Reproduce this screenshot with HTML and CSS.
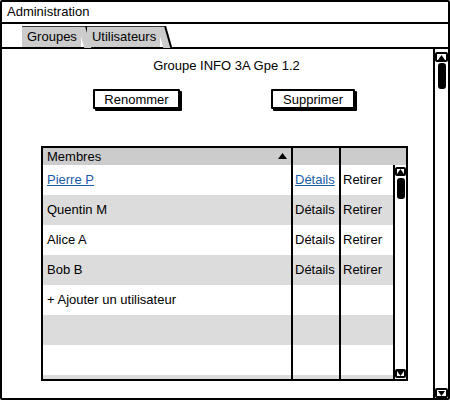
FILE: index.html
```html
<!DOCTYPE html>
<html>
<head>
<meta charset="utf-8">
<link rel="stylesheet" href="styles.css">
</head>
<body>
<div class="window">
  <div class="titlebar">Administration</div>
  <div class="tabbar">
    <div class="tab">Groupes</div>
    <div class="tab">Utilisateurs</div>
  </div>
  <div class="panel">
    <div class="content">
      <div class="group-title">Groupe INFO 3A Gpe 1.2</div>
      <div class="actions">
        <button class="btn btn-rename">Renommer</button>
        <button class="btn btn-delete">Supprimer</button>
      </div>
      <div class="table">
        <div class="thead">
          <div class="hcell hname">Membres<svg class="sort" width="9" height="6" viewBox="0 0 9 6"><path d="M0 6 L4.5 0 L9 6 Z" fill="#000"/></svg></div>
          <div class="hcell hdet"></div>
          <div class="hcell hret"></div>
        </div>
        <div class="tbody">
          <div class="rows">
            <div class="row"><div class="cell name"><a class="link">Pierre P</a></div><div class="cell det"><a class="link">Détails</a></div><div class="cell ret">Retirer</div></div>
            <div class="row alt"><div class="cell name">Quentin M</div><div class="cell det">Détails</div><div class="cell ret">Retirer</div></div>
            <div class="row"><div class="cell name">Alice A</div><div class="cell det">Détails</div><div class="cell ret">Retirer</div></div>
            <div class="row alt"><div class="cell name">Bob B</div><div class="cell det">Détails</div><div class="cell ret">Retirer</div></div>
            <div class="row"><div class="cell name">+ Ajouter un utilisateur</div><div class="cell det"></div><div class="cell ret"></div></div>
            <div class="row alt"><div class="cell name"></div><div class="cell det"></div><div class="cell ret"></div></div>
            <div class="row"><div class="cell name"></div><div class="cell det"></div><div class="cell ret"></div></div>
            <div class="row alt"><div class="cell name"></div><div class="cell det"></div><div class="cell ret"></div></div>
          </div>
          <div class="scroll inner">
            <div class="arrow"><svg width="7" height="5" viewBox="0 0 7 5"><path d="M0 5 L3.5 0 L7 5 Z" fill="#000"/></svg></div>
            <div class="thumb"></div>
            <div class="track"></div>
            <div class="arrow"><svg width="7" height="5" viewBox="0 0 7 5"><path d="M0 0 L3.5 5 L7 0 Z" fill="#000"/></svg></div>
          </div>
        </div>
      </div>
    </div>
    <div class="scroll outer">
      <div class="arrow"><svg width="7" height="5" viewBox="0 0 7 5"><path d="M0 5 L3.5 0 L7 5 Z" fill="#000"/></svg></div>
      <div class="thumb"></div>
      <div class="track"></div>
      <div class="arrow"><svg width="7" height="5" viewBox="0 0 7 5"><path d="M0 0 L3.5 5 L7 0 Z" fill="#000"/></svg></div>
    </div>
  </div>
</div>
</body>
</html>
```

FILE: styles.css
```css
* { box-sizing: border-box; }
body {
  margin: 0;
  background: #fff;
  font-family: "Liberation Sans", Arial, sans-serif;
  font-size: 13px;
  color: #000;
}
.window {
  width: 450px;
  height: 400px;
  border: 2px solid #000;
  border-radius: 2px;
  display: flex;
  flex-direction: column;
  overflow: hidden;
}
.titlebar {
  height: 22px;
  line-height: 20px;
  padding-left: 5px;
  border-bottom: 2px solid #000;
  flex: none;
}
.tabbar {
  height: 25px;
  flex: none;
  display: flex;
  align-items: flex-end;
  padding-left: 20px;
  border-bottom: 2px solid #000;
}
.tab {
  position: relative;
  height: 21px;
  line-height: 19px;
  background: #cccccc;
  border-top: 1px solid #333;
  padding: 0 4px 0 5px;
  margin-right: 6px;
}
.tab::after {
  content: "";
  position: absolute;
  top: -1px;
  right: -6px;
  width: 7px;
  height: 21px;
  background: #cccccc;
  border-top: 1px solid #333;
  border-right: 2px solid #000;
  transform: skewX(16deg);
  transform-origin: top left;
}
.panel {
  flex: 1;
  display: flex;
  min-height: 0;
}
.content {
  flex: 1;
  display: flex;
  flex-direction: column;
  padding-top: 9px;
}
.group-title {
  text-align: center;
  line-height: 16px;
  padding-left: 18px;
}
.actions {
  display: flex;
  gap: 91px;
  padding-left: 91px;
  margin-top: 15px;
}
.btn {
  font-family: inherit;
  font-size: 13px;
  height: 20px;
  padding: 0;
  background: #fff;
  border: 2px solid #000;
  border-radius: 1px;
  box-shadow: 2px 2px 0 #000;
  color: #000;
}
.btn-rename { width: 87px; }
.btn-delete { width: 84px; }
.table {
  margin-top: 37px;
  margin-left: 39px;
  width: 367px;
  height: 235px;
  border: 2px solid #000;
  display: flex;
  flex-direction: column;
  overflow: hidden;
}
.thead {
  display: flex;
  height: 17px;
  background: #cccccc;
  line-height: 17px;
  flex: none;
}
.hcell { border-right: 2px solid #000; }
.hname {
  width: 250px;
  padding-left: 4px;
  display: flex;
  align-items: center;
  justify-content: space-between;
  padding-right: 4px;
}
.sort { margin-bottom: 1px; }
.hdet { width: 48px; }
.hret { flex: 1; border-right: none; }
.tbody {
  flex: 1;
  display: flex;
  min-height: 0;
}
.rows { flex: 1; overflow: hidden; }
.row {
  display: flex;
  height: 30px;
  line-height: 30px;
}
.row.alt { background: #dcdcdc; }
.cell { border-right: 2px solid #000; white-space: nowrap; }
.name { width: 250px; padding-left: 4px; }
.det { width: 48px; padding-left: 2px; }
.ret { flex: 1; padding-left: 2px; border-right: none; }
.link { color: #1a5ca8; text-decoration: underline; }
.scroll {
  display: flex;
  flex-direction: column;
  align-items: center;
  background: #fff;
  flex: none;
}
.scroll.inner {
  width: 13px;
  border-left: 2px solid #000;
  padding-top: 2px;
  padding-bottom: 1px;
}
.scroll.outer {
  width: 15px;
  border-left: 2px solid #000;
  padding-top: 3px;
  padding-bottom: 0;
}
.arrow {
  width: 100%;
  height: 10px;
  border: 2px solid #000;
  border-radius: 2px;
  display: flex;
  align-items: center;
  justify-content: center;
  flex: none;
}
.inner .arrow { height: 9px; }
.thumb {
  width: 8px;
  background: #000;
  border-radius: 3px;
  flex: none;
}
.inner .thumb { height: 21px; margin-top: 2px; }
.outer .thumb { height: 26px; margin-top: 1px; }
.track { flex: 1; }
```
